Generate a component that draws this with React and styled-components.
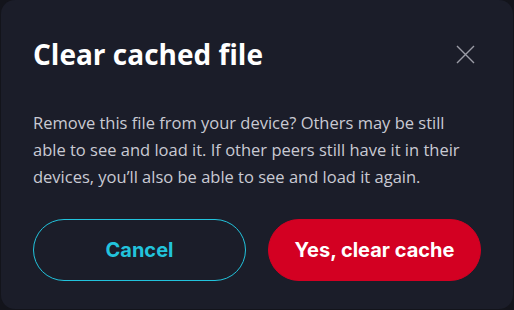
import React from "react"
import styled, { createGlobalStyle } from "styled-components"

const GlobalStyle = createGlobalStyle`
  html, body {
    margin: 0;
    padding: 0;
    background: #13141b;
  }
`;

const Dialog = styled.div`
  width: 512px;
  height: 309px;
  margin-left: 1px;
  box-sizing: border-box;
  background-color: #1b1d29;
  border-radius: 14px;
  padding: 34px 32px 0 32px;
  display: flex;
  flex-direction: column;
`;

const Header = styled.div`
  display: flex;
  justify-content: space-between;
  align-items: center;
`;

const Title = styled.h2`
  margin: 0;
  font-family: "Open Sans", sans-serif;
  font-weight: 700;
  font-size: 28px;
  line-height: 40px;
  color: #ffffff;
`;

const CloseButton = styled.button`
  background: none;
  border: none;
  padding: 0;
  margin-right: 6px;
  width: 20px;
  height: 20px;
  display: flex;
  align-items: center;
  justify-content: center;
  cursor: pointer;
`;

const Body = styled.p`
  margin: 35px 0 0 0;
  font-family: "Open Sans", sans-serif;
  font-size: 16.5px;
  line-height: 27px;
  color: #c9cad3;
`;

const Actions = styled.div`
  display: grid;
  grid-template-columns: 1fr 1fr;
  gap: 22px;
  margin-top: 29px;
`;

const Button = styled.button`
  height: 62px;
  border-radius: 31px;
  font-family: "Inter", sans-serif;
  font-weight: 700;
  font-size: 20px;
  cursor: pointer;
  border: 1px solid ${props => props.primary ? "#d30022" : "#22c3dc"};
  background-color: ${props => props.primary ? "#d30022" : "transparent"};
  color: ${props => props.primary ? "#ffffff" : "#22c3dc"};
`;

const App = () => {
  return (
    <>
      <GlobalStyle />
      <Dialog>
        <Header>
          <Title>Clear cached file</Title>
          <CloseButton aria-label="Close">
            <svg width="19" height="19" viewBox="0 0 19 19">
              <path d="M1 1L18 18M18 1L1 18" stroke="#9b9ca6" strokeWidth="1.4" />
            </svg>
          </CloseButton>
        </Header>
        <Body>
          Remove this file from your device? Others may be still able to see and load it. If other peers still have it in their devices, you’ll also be able to see and load it again.
        </Body>
        <Actions>
          <Button>Cancel</Button>
          <Button primary>Yes, clear cache</Button>
        </Actions>
      </Dialog>
    </>
  )
}

export default App
